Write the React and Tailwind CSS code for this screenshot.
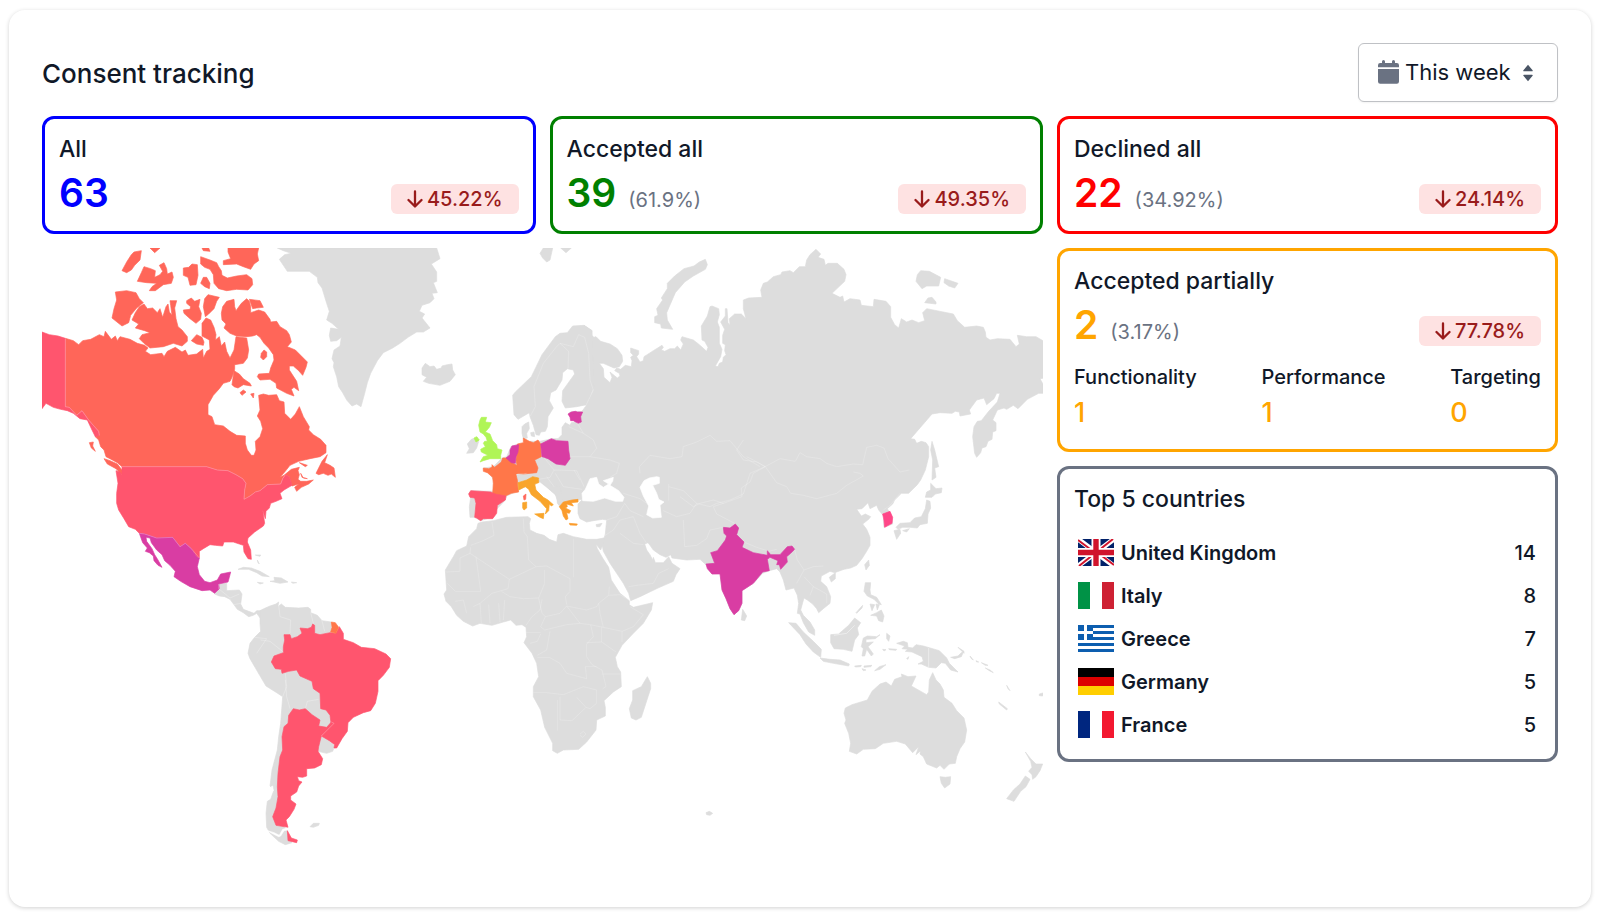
import React from "react";

/* ---------- Map data: every region is drawn in its own local frame ---------- */

const GREY = "#dddddd";
const CORAL = "#ff6659";
const ROSE = "#ff556e";
const MAGENTA = "#d93da3";
const ORANGE = "#ff7749";

// Moves a run of "x,y" points by an offset so that runs can be joined to one outline.
const shift = (dx, dy, points) =>
  points
    .trim()
    .split(/\s+/)
    .map((pair) => {
      const [x, y] = pair.split(",").map(Number);
      return `${x + dx},${y + dy}`;
    })
    .join(" ");

const EURASIA = [
  "462,256 486,272 482,284 492,292 498,290 512,304 540,312 562,326 576,346 578,364 568,380 552,384 520,370 508,370 520,386 522,412 540,428 546,412 540,396 562,414 570,408 568,400 554,392 560,384 572,388 586,376 604,380 606,362 602,352 610,346 602,338 602,324 626,332 626,342 620,350 630,366 640,362",
  shift(
    630,
    0,
    "12,350 40,332 66,316 70,322 64,330 74,334 90,326 104,326 112,318 122,330 130,312 122,300 126,290 160,300 178,314 200,334 204,322 194,304 186,300 184,258 202,228 210,200 216,198 236,206 238,224 232,246 238,262 238,310 246,328 242,350 226,378 234,380 238,370 248,366 250,352 258,344 254,332 256,314 248,310 248,286 254,268 242,246 256,228 256,206 261,206 264,248 270,254 268,236 284,222 304,222 318,236 310,206 310,180 326,174 366,172 362,150 370,130 382,126 400,110 422,104 426,96 450,92 460,98 478,80 496,80 500,60 510,44 528,28 542,42 534,52 552,58 556,76 564,70 592,70 612,88 618,104 614,124 576,160 600,172 608,168 612,186 630,176 660,180 664,196 700,200 702,178 738,184 752,200 752,232 764,254 776,264 784,236 800,246 816,240 836,248 854,242 848,218 860,206 940,222 952,242 974,262 1010,258 1030,262 1036,276 1038,292 1050,300 1072,296 1110,298 1128,320 1138,312 1132,286 1160,290 1188,290 1212,304 1212,414 1200,416 1210,434 1210,460 1196,460 1162,478 1134,506 1120,496 1100,508 1092,504 1072,510 1058,540 1068,548 1068,572 1058,576 1056,598 1044,604 1038,620 1026,624 1022,638 1010,652 1004,640 998,590 1002,560 1012,544 1024,542 1046,514 1072,486 1080,460 1070,460 1062,476 1040,494 1032,474 1010,480 988,510 992,522 960,528 958,516 946,514 936,520 900,518 876,522 812,596 824,598 830,610 844,604 858,608 866,620 866,650 856,690 842,720",
  ),
  shift(
    750,
    600,
    "712,134 686,160 664,160 644,180 638,192 622,206 628,216 636,232 638,252 612,262 610,240 616,234 606,222 596,210 590,196 570,206 564,188 546,206 530,208 544,228 556,222 572,230 566,238 548,252 560,268 570,292 570,316 560,334 546,356 530,376 512,384 492,388 464,398 450,394 424,408 422,424 440,440 452,470 450,490 430,506 416,518 410,506 398,492 382,480 372,474 368,488 362,510 370,526 390,546 404,570 404,586 386,576 370,548 360,522 352,520 356,490 352,466 342,444 318,450 310,420 300,396 290,386 268,392 248,400 220,430 186,452 186,490 176,512 162,524 150,506 138,476 126,450 120,400 96,402 78,374 60,358",
  ),
  shift(
    -30,
    690,
    "840,268 800,270 756,264 752,254 738,262 720,254 700,240 690,226 684,218 674,222 680,240 690,254 698,270 700,262 706,278 730,278 746,260 756,280 780,296 768,314 760,334 714,354 660,380 632,392 626,370 610,340 590,310 570,280 550,244 546,222 556,192 560,150 548,148 520,152 500,156 480,146 474,130 474,112",
  ),
  "444,792 458,778 444,780 420,782 400,788 388,800 378,786 376,764 350,744 330,728 322,732 300,738 280,742 264,752 230,768 226,780 200,808 190,830 152,842 134,832 120,832 118,800 122,772 116,760 124,752 190,754 190,720 180,700 160,690 160,684 190,680 216,654 230,650 244,618 262,614 282,610 300,604 330,604 366,596 384,596 396,584 396,562 406,548 420,556 424,548 440,546 416,524 420,516 456,514 466,500 490,450 470,340",
].join(" ");

const REGIONS = [
  {
    name: "north-america",
    at: "translate(-36 -24)",
    line: 0.3,
    shapes: [
      [GREY, "742,24 1220,24 1230,56 1204,72 1220,96 1220,124 1210,128 1222,158 1206,160 1212,176 1200,188 1176,196 1168,214 1184,222 1176,234 1200,264 1180,276 1160,276 1134,292 1110,310 1088,324 1060,338 1042,362 1022,400 1012,428 1004,460 993,500 980,492 966,498 950,480 938,458 926,440 920,410 910,380 912,368 906,356 912,330 930,318 934,292 920,302 902,304 898,286 902,264 926,268 906,250 890,240 898,214 890,190 876,144 864,128 862,112 838,94 772,94 748,58 764,44 784,40 760,32"],
      [CORAL, "106,295 130,302 146,314 158,302 182,298 208,284 222,290 226,274 244,298 256,288 262,302 270,290 300,298 322,310 344,316 354,324 346,334 362,344 396,340 402,350 412,334 436,322 456,336 466,330 474,346 500,342 518,328 520,354 530,334 540,328 538,300 516,288 516,250 528,234 542,240 552,262 558,284 556,300 568,290 574,318 584,306 590,334 600,354 612,330 618,290 650,294 656,330 652,354 640,370 614,374 614,388 606,412 600,424 580,430 568,446 550,466 534,494 534,524 546,530 554,554 580,558 600,574 620,586 646,588 646,610 652,630 664,646 672,646 678,630 676,604 690,590 698,566 692,544 682,528 690,510 686,466 700,462 716,466 740,464 748,482 762,486 764,520 782,538 796,522 808,500 820,530 838,560 836,570 850,584 872,598 888,616 888,638 870,650 840,656 806,664 780,676 764,696 750,712 762,706 784,688 808,682 804,692 808,704 804,718 812,724 830,724 850,720 836,732 814,742 800,754 794,742 806,732 786,738 778,710 766,704 758,716 752,732 712,734 690,752 676,756 660,768 642,780 644,750 648,730 638,716 618,704 594,692 562,690 530,680 276,680 262,668 240,656 228,650 222,630 212,620 206,600 196,590 208,586 206,574 190,556 176,540 156,512 140,526 118,502 106,500"],
      [CORAL, "256,156 290,152 318,158 328,176 340,188 320,204 302,226 296,248 276,258 246,234 252,206 260,180"],
      [CORAL, "306,240 316,218 328,200 342,192 352,206 368,204 382,218 390,206 398,232 408,200 414,192 418,216 426,226 422,196 420,182 440,182 434,204 438,236 444,260 456,270 472,290 472,304 456,318 430,310 400,320 360,324 342,310 328,296 336,284 360,278 344,272 316,264 326,252"],
      [CORAL, "276,92 290,66 304,44 312,36 334,32 330,60 314,76 304,90 290,98"],
      [CORAL, "360,24 390,24 374,38"],
      [CORAL, "322,124 334,98 342,80 362,86 376,92 374,112 390,104 398,94 388,76 402,68 410,86 412,102 426,96 430,112 424,130 400,134 376,152 358,152 366,140 380,130 350,128"],
      [CORAL, "460,84 476,82 486,72 502,74 504,106 498,134 480,136 474,112 460,106"],
      [CORAL, "516,24 536,24 540,34 520,32"],
      [CORAL, "512,50 540,60 560,68 566,80 574,92 576,106 592,114 620,108 650,104 666,116 668,134 654,150 620,148 590,152 566,146 552,130 550,104 540,88 524,82 512,72"],
      [CORAL, "594,24 686,24 682,42 686,62 672,72 662,88 640,80 620,72 580,74 580,62 602,56 594,36"],
      [CORAL, "512,130 520,112 530,112 540,130 538,146 524,140"],
      [CORAL, "470,182 484,174 494,184 510,178 506,200 514,220 512,238 498,250 480,236 462,220 460,210 480,208 482,200 470,190"],
      [CORAL, "524,176 534,164 568,172 560,184 552,206 536,222 526,230 520,200"],
      [CORAL, "484,302 500,284 516,292 522,306 520,316 500,312"],
      [CORAL, "578,200 590,184 612,178 614,200 618,212 634,190 650,176 658,184 662,200 662,218 686,210 704,216 720,238 722,246 740,244 750,260 770,272 778,284 784,306 772,320 796,330 812,346 832,366 828,382 818,406 806,392 790,378 778,378 778,390 800,424 806,452 792,442 784,448 792,468 770,460 740,444 738,430 720,418 690,420 682,410 686,402 718,400 722,384 732,360 730,344 716,324 702,310 690,292 680,284 668,288 650,290 620,288 600,280 582,264 588,252 576,240 574,220"],
      [CORAL, "658,178 690,182 700,202 680,204 668,206"],
      [CORAL, "694,340 702,330 710,336 710,350 700,360 692,352"],
      [CORAL, "612,392 628,402 640,416 660,430 664,438 640,434 624,444 612,440 606,434"],
      [CORAL, "630,458 640,450 648,456 636,466"],
      [CORAL, "662,462 672,460 670,474"],
      [CORAL, "222,656 240,662 262,672 276,690 276,704 258,686 232,672"],
      [CORAL, "178,608 190,606 188,618 196,634 184,624"],
      [CORAL, "858,700 876,664 892,644 884,668 900,676 912,684 916,712 904,702 894,706 880,700 866,704"],
      [CORAL, "808,668 832,676 826,680"],
      [CORAL, "812,700 820,714 832,716 816,712"],
      [ROSE, "36,276 58,284 84,288 106,295 106,500 118,502 140,526 156,512 176,540 190,556 206,574 208,586 196,590 186,570 172,540 150,536 130,520 112,512 92,508 70,502 48,490 36,506"],
    ],
    borders: ["M106,295V500L118,502 140,526 156,512 176,540 190,556 206,574 208,586"],
  },
  {
    name: "central-america",
    at: "translate(-36 576)",
    line: 0.3,
    shapes: [
      [ROSE, "276,80 530,80 562,90 594,92 618,104 638,116 648,130 644,150 642,178 660,168 676,156 690,152 712,134 752,132 758,116 766,104 778,110 786,136 762,150 750,160 756,176 738,184 722,190 718,204 708,214 706,236 698,210 704,250 700,258 674,276 654,294 652,306 662,330 664,358 654,356 642,336 640,316 628,312 610,306 582,306 578,318 556,316 540,314 520,326 508,334 508,354 500,350 484,326 466,310 450,320 428,292 408,296 380,294 344,282 328,280 316,268 296,260 282,236 266,210 260,190 260,160 264,130 258,92 270,96 276,104"],
      [GREY, "566,432 590,430 590,452 628,450 636,462 632,492 640,508 656,514 672,520 680,512 692,512 702,508 692,536 680,520 670,526 656,530 640,518 622,508 612,494 600,478 584,470 568,468 554,462 568,446"],
      [MAGENTA, "328,280 344,282 380,294 428,292 450,320 466,310 484,326 500,350 508,354 502,380 508,404 524,424 540,428 562,420 572,402 602,396 598,412 594,426 566,432 568,446 554,460 540,450 516,452 480,440 452,424 432,410 436,394 420,376 404,362 396,344 380,330 364,308 360,294 348,292 350,304 366,326 374,344 384,360 396,382 384,376 372,362 370,348 358,338 346,334 352,324 338,308"],
      [GREY, "624,388 640,382 664,384 690,394 718,410 696,408 680,398 656,388"],
      [GREY, "720,424 734,422 732,412 754,414 774,426 750,430 732,426"],
      [GREY, "682,427 700,429 690,432"],
      [GREY, "784,426 800,428 788,430"],
      [GREY, "676,345 692,345 690,349 682,347"],
      [GREY, "682,360 688,372 684,368"],
    ],
    borders: [
      "M276,80H530L562,90 594,92 618,104 638,116 648,130 644,150 642,178 660,168 676,156 690,152 712,134 752,132 758,116 766,104",
      "M328,280L344,282 380,294 428,292 450,320 466,310 484,326 508,354",
      "M566,432V446L600,474 628,462M612,494L632,490",
    ],
  },
  {
    name: "south-america",
    at: "translate(534 1026)",
    line: 0.3,
    shapes: [
      [GREY, "120,62 136,54 150,48 168,42 176,36 174,50 184,42 196,52 236,54 264,52 272,58 272,68 292,76 306,92 334,96 334,400 310,430 200,480 186,700 196,716 202,722 204,752 216,758 196,764 176,754 150,730 140,712 138,670 142,634 152,628 162,600 150,588 156,540 172,480 176,440 182,400 188,320 170,308 138,288 112,244 90,206 84,190 90,160 104,142 122,124 120,100"],
      [GREY, "304,438 328,452 344,468 338,484 320,490 294,484 296,460"],
      [ROSE, "192,134 210,134 214,146 232,140 246,130 240,114 262,116 274,112 278,102 284,106 284,130 300,134 330,128 348,130 358,110 370,130 370,148 400,158 424,172 464,176 498,192 512,206 508,232 490,256 474,272 474,304 466,340 452,362 430,368 400,382 384,398 382,424 366,446 350,474 342,474 344,464 328,452 304,438 334,406 330,376 318,360 302,356 300,310 280,296 276,274 240,258 230,240 206,244 186,250 184,238 166,236 154,216 162,198 190,188 190,170 194,150"],
      [ORANGE, "334,96 346,98 356,112 348,130 332,126 336,112"],
      [ROSE, "206,376 220,356 238,360 256,356 276,374 300,390 296,408 320,412 334,396 342,400 304,438 296,470 294,484 308,506 304,524 284,534 260,536 260,558 248,562 232,560 236,572 246,576 236,588 230,606 212,618 212,630 228,642 222,658 208,680 198,690 204,712 168,706 158,680 168,654 174,620 172,590 174,550 180,500 188,480 186,440 192,410 204,400"],
      [ROSE, "202,722 214,744 232,750 230,758 204,752"],
      [GREY, "270,710 280,700 298,700 296,706 280,712"],
      ["#ffffff", "142,722 162,728 178,736 188,718 202,714 202,720 192,722 182,738 176,740 160,732"],
      ["#ffffff", "154,590 158,588 160,602 152,606"],
    ],
    borders: [
      "M188,320L200,290 196,250M210,356L200,320 196,270M256,356L262,334 296,328",
      "M176,44L180,80 212,90 210,130M272,68L280,100M306,92L314,124",
      "M122,150L150,154 190,186M104,142L140,146 110,190",
      "M304,438L342,400 334,396",
    ],
  },
  {
    name: "eurasia",
    at: "translate(1164 -24)",
    line: 0.24,
    shapes: [
      [GREY, EURASIA],
      [GREY, "248,466 256,456 304,410 336,344 376,290 390,280 412,278 428,258 462,256 486,272 492,440 470,494 440,500 406,504 396,484 398,452 434,402 430,390 412,386 398,398 396,420 378,450 362,458 358,482 370,504 354,530 352,560 346,574 332,576 328,586 318,584 310,556 300,530 298,518 264,538 252,524"],
      [GREY, "276,580 276,560 284,552 296,546 298,566 290,580 292,594 280,596"],
      [GREY, "302,578 312,576 314,590 304,588"],
      [GREY, "-24,384 -14,370 0,380 12,378 20,388 34,384 36,378 52,374 66,372 68,390 76,404 60,424 30,436 -4,430 -20,424 -10,412 -24,404"],
      [GREY, "330,40 340,24 368,24 360,60 350,66 338,54"],
      [GREY, "392,24 424,24 408,38"],
      [GREY, "112,612 124,598 142,592 146,604 140,624 130,638 110,640 118,626"],
      ["#b0f557", "132,594 140,590 148,600 138,606"],
      ["#b0f557", "150,540 154,532 170,532 166,546 184,548 178,562 166,576 180,582 188,602 200,614 202,626 216,630 212,646 212,656 180,656 160,662 150,666 160,650 174,646 154,636 152,628 166,620 160,610 164,604 172,604 168,592 160,582 150,576 146,556"],
      ["#ffffff", "458,782 456,760 466,748 480,716 500,712 506,732 520,742 536,732 520,722 550,712 548,724 540,736 566,752 582,772 578,784 556,784 524,774 490,784"],
      ["#ffffff", "630,742 642,722 658,714 680,710 688,712 688,730 668,736 680,760 686,778 702,786 690,796 694,832 668,834 650,824 656,798 640,768"],
      [ORANGE, "160,684 176,686 186,682 186,674 194,682 214,666 218,654 232,654 250,670 260,676 276,680 270,690 258,704 262,720 264,744 266,756 244,760 226,768 188,762 190,730 188,712 172,698 160,694"],
      [CORAL, "280,768 288,762 287,778 282,780"],
      [ROSE, "116,762 122,752 182,756 196,762 228,768 226,780 202,796 200,820 188,836 160,836 152,842 140,834 134,832 138,790 134,774 120,772"],
      [ORANGE, "262,612 280,608 280,594 298,604 310,608 324,600 332,612 334,650 314,660 324,684 320,698 280,702 258,700 262,680 258,660 260,640"],
      [MAGENTA, "228,654 240,644 240,630 246,618 266,614 264,636 258,650 256,670 244,668"],
      [MAGENTA, "332,612 364,596 380,602 414,604 416,630 420,656 406,676 378,672 354,656 336,650"],
      [MAGENTA, "414,522 424,516 436,514 442,516 458,516 452,530 454,546 444,550 430,542 422,542 420,532"],
      ["#ffffff", "318,730 330,728 350,744 378,768 380,790 390,802 400,830 360,830 340,780"],
      [GREY, "340,730 376,764 390,802 400,788 390,740"],
      ["#f9a52b", "264,728 290,720 308,710 326,714 326,728 314,732 318,750 340,772 354,780 370,794 364,798 358,792 356,812 346,822 350,806 330,784 304,764 296,748 286,740 266,750"],
      ["#f9a52b", "278,788 290,786 290,804 282,810 278,804"],
      ["#f9a52b", "314,822 342,820 340,836 330,832"],
      ["#fb9c2c", "388,800 400,786 426,780 444,778 444,786 424,788 430,798 410,792 412,800 406,804 422,812 418,820 410,818 414,836 408,840 400,828 396,812"],
      ["#fb9c2c", "418,850 442,852 440,856 420,855"],
      [GREY, "498,854 516,850 510,860 500,860"],
    ],
    borders: [
      "M300,530L316,500 312,440 340,370 378,322 390,310 416,334 414,386",
      "M390,310L430,320 446,284 464,292 476,340 480,420 490,450 466,500",
      "M416,560L460,580 490,600 500,625 480,650 420,650M440,546L460,580M480,650L540,660 568,670 560,700 540,712",
      "M340,650L372,690 360,712 326,718M372,690L440,692 462,740M376,700L400,740 456,748M350,710L372,740",
      "M258,704L290,700M432,690L450,720",
      "M630,700L628,680 660,646 720,656 756,650 760,620 800,606 840,586 860,604 900,602 940,650 990,680",
      "M716,732V782M716,740L760,752 800,790 840,800 860,790 900,780 940,762M800,790L780,820 740,830 700,812",
      "M580,760L630,776 650,790M584,790L600,812 640,830M584,790L560,830 530,840 500,870",
      "M940,762L960,700 1005,680",
    ],
  },
  {
    name: "siberia",
    at: "translate(1794 -24)",
    line: 0.24,
    shapes: [
      [GREY, "44,230 54,226 50,206 68,180 64,174 82,146 82,130 104,108 132,86 162,78 178,66 196,58 202,74 196,88 160,108 134,126 106,158 80,218 82,240 98,268 64,264 62,252 44,248"],
      [GREY, "832,104 842,92 868,94 902,112 896,138 860,138 846,146 828,124"],
      [GREY, "914,116 954,130 944,144 926,138 912,128"],
      [GREY, "854,188 864,174 876,172 888,186 888,192"],
    ],
    borders: [
      "M375,680L420,656 466,664 480,638 500,650 540,656 560,670 590,680 640,672 668,674 680,622 710,616 732,624 744,656 780,696 808,690",
      "M375,680L340,660 320,650",
    ],
  },
  {
    name: "africa",
    at: "translate(1134 666)",
    line: 0.22,
    shapes: [
      [GREY, "174,160 186,156 220,152 260,142 324,140 332,146 328,160 330,180 350,190 372,196 388,208 410,216 414,194 430,190 460,200 500,208 530,208 552,204 550,220 542,240 528,222 532,236 548,264 566,292 574,330 600,370 628,392 628,404 640,412 698,398 694,420 670,460 640,490 606,526 586,562 592,590 602,606 604,650 580,666 552,692 556,712 556,738 530,750 528,780 500,816 476,838 430,840 412,850 398,842 398,820 374,772 362,720 340,680 340,650 356,620 350,580 336,550 312,518 320,500 318,472 306,464 288,466 272,450 250,456 216,466 180,460 158,468 130,454 110,436 94,410 78,394 72,372 80,360 76,300 100,260 110,242 140,228 146,200 170,176"],
      [GREY, "682,620 692,640 692,656 684,680 664,742 648,750 634,744 628,716 638,690 638,662 664,650"],
    ],
    borders: [
      "M152,232L150,250 120,264 120,304 78,306M150,250L268,328 264,356 216,370 180,400 160,410M168,260L182,364H106L82,340",
      "M152,226L190,212 222,196 216,156M310,146L312,186 322,200 326,270 348,290 268,328",
      "M348,290L380,288 450,326V364L436,380 440,404M460,206V322",
      "M374,300L374,340 356,384 310,386 270,380 244,364M366,388L360,420 336,440 318,466",
      "M356,384L366,430 376,440 420,430 440,408 480,460 510,464 550,472 606,484V516",
      "M440,408L500,420 530,410 536,400 566,376 568,350M566,376L600,374 630,392M536,400L540,430 550,472M606,484L640,470 670,434 630,410",
      "M376,440L362,470 374,480 440,464 480,460M318,488H362M330,520L352,514 362,492M352,562H388L420,580 440,610 500,626 496,590 530,590M390,484L380,540 352,556",
      "M512,464L520,500 500,522V560L516,584 546,600 558,650 548,656M545,472V516L500,518M545,516L588,546M545,612H600",
      "M340,668H380L430,674 490,650 530,660 530,700 510,716 498,712 470,682M412,782V690M420,680V750L456,752 498,712",
      "M106,394L130,390 140,430M180,400L184,460M206,404L210,460M236,400L240,456M254,390L250,450M480,792L490,784 498,792 488,802 480,796",
      "M550,200L580,180 600,150 640,140M600,190L640,220 670,224M626,350L650,346 700,340 716,310 746,296M640,140L660,190 680,220",
    ],
  },
  {
    name: "asia",
    at: "translate(1914 576)",
    line: 0.24,
    shapes: [
      [MAGENTA, "130,262 150,264 166,252 176,264 170,284 192,306 186,322 220,338 262,346 262,332 272,344 300,344 322,320 336,318 344,328 332,340 320,350 322,366 302,388 298,374 290,374 294,362 270,352 262,358 268,392 248,396 220,430 186,452 186,490 176,512 162,524 150,506 138,476 126,450 120,402 96,402 82,386 78,372 104,370 92,338 112,332 136,300 140,288 132,280"],
      [GREY, "188,508 200,528 194,542 184,540"],
      ["#ff4788", "608,222 630,214 638,232 636,250 614,262 612,242"],
      [GREY, "736,172 740,156 752,150 752,130 768,146 786,144 784,158 766,162 756,172"],
      [GREY, "740,180 750,184 752,204 744,222 742,250 720,254 712,264 690,262 668,262 654,268 648,262 660,250 690,248 704,234 724,230 736,206"],
      [GREY, "642,272 660,268 662,280 650,298"],
      [GREY, "668,272 688,266 680,276"],
      [GREY, "756,4 764,30 776,80 764,84 768,112 756,120 758,60 752,30"],
      [GREY, "566,360 568,376 558,390 554,374"],
      [GREY, "448,412 466,398 466,416 454,426"],
    ],
    borders: [
      "M190,0L170,30 190,60 232,66 256,80 290,128 320,140 332,160 370,166 410,176 470,160 500,136 550,108 540,100 520,96",
      "M256,80L220,100 210,126 184,144 186,170 130,190 100,200M0,170L40,200 60,190 100,180 130,190M100,200L110,222 164,250",
      "M192,306L230,322 262,332M266,334L290,328M344,328L352,360 372,390 400,380 430,378M372,390L350,430M372,410L400,440 390,466M400,440L440,462 440,490M610,210L630,196 660,160",
      "M10,240L14,320 50,316 80,296 90,270 130,262",
    ],
  },
  {
    name: "oceania",
    at: "translate(2214 996)",
    line: 0.5,
    shapes: [
      [GREY, "256,8 272,8 270,30 272,44 290,52 304,74 296,72 282,58 262,48 252,34"],
      [GREY, "270,72 284,74 276,92"],
      [GREY, "288,72 298,74 292,90"],
      [GREY, "272,106 290,98 304,90 312,108 308,126 296,122 290,108"],
      [GREY, "248,76 246,84 230,100 228,98"],
      [GREY, "26,128 48,130 70,156 100,184 124,208 122,232 100,216 78,192 60,164"],
      [GREY, "120,234 150,238 180,240 208,252 206,258 160,250 130,244"],
      [GREY, "224,258 244,256 242,260 226,261"],
      [GREY, "252,258 276,256 272,260 252,262"],
      [GREY, "246,266 258,270 250,272"],
      [GREY, "284,272 298,260 318,254 300,268"],
      [GREY, "152,164 176,162 206,136 224,114 242,128 232,144 236,164 224,180 216,214 190,208 162,206 152,188"],
      [GREY, "250,174 262,168 290,170 300,164 286,176 258,178 258,188 280,186 264,200 280,222 274,228 260,208 254,228 246,228 250,206 244,200"],
      [GREY, "320,160 330,168 326,184 320,176"],
      [GREY, "326,206 350,208 348,211 328,209"],
      [GREY, "308,208 318,209 312,213"],
      [GREY, "380,236 386,230 384,238"],
      [GREY, "350,190 370,184 382,188 384,202 398,204 408,194 430,198 478,212 500,234 508,250 534,276 512,270 496,250 484,248 468,264 446,262 424,252 414,252 430,244 426,230 396,216 376,214 384,208 366,206 374,198"],
      [GREY, "512,232 534,228 544,218 550,216 544,230 524,236"],
      [GREY, "534,202 552,214 552,220 538,206"],
      [GREY, "570,228 580,240 574,236"],
      [GREY, "588,242 596,246 590,246"],
      [GREY, "604,248 624,256 616,256"],
      [GREY, "616,264 630,270 640,278 628,272"],
      [GREY, "680,316 690,332 684,326"],
      [GREY, "656,366 682,386 680,390 658,372"],
      [GREY, "778,342 792,338 788,348 778,347"],
      [GREY, "196,384 216,374 262,360 276,334 300,312 318,306 334,318 344,298 366,290 364,282 384,290 408,288 394,318 440,344 446,336 448,300 458,278 468,300 480,312 490,330 492,352 516,370 530,392 552,414 560,450 554,486 540,506 530,530 526,550 508,552 492,568 480,556 470,564 440,552 430,530 420,522 422,512 408,524 416,500 398,518 376,492 350,484 310,490 286,506 250,508 230,522 208,514 212,490 206,460 194,430 198,420 192,400"],
      [GREY, "480,590 496,592 512,590 510,612 494,624 484,610"],
      [GREY, "736,516 752,536 768,552 788,552 780,572 768,590 758,598 756,584 746,574 756,562 752,544"],
      [GREY, "736,588 750,598 738,620 722,634 702,664 680,656 700,630 720,612"],
      [GREY, "-222,698 -212,694 -202,700 -210,706 -220,704"],
    ],
    borders: ["M446,204V262M162,166L200,160 224,136"],
  },
];

function WorldMap() {
  return (
    <svg
      viewBox="0 0 3003 1878"
      className="block h-auto w-full"
      role="img"
      aria-label="Consents by country"
    >
      {REGIONS.map((region) => (
        <g key={region.name} transform={region.at}>
          {region.shapes.map(([fill, points]) => (
            <polygon
              key={points}
              points={points}
              fill={fill}
              stroke={fill}
              strokeWidth="2"
              strokeLinejoin="round"
            />
          ))}
          {region.borders.map((d) => (
            <path key={d} d={d} fill="none" stroke="#ffffff" strokeOpacity={region.line} strokeWidth="2.5" strokeLinejoin="round" />
          ))}
        </g>
      ))}
    </svg>
  );
}

/* ---------- Flags ---------- */

const FLAG = "h-[27px] w-9 shrink-0";

function UnitedKingdomFlag() {
  return (
    <svg viewBox="0 0 36 27" className={FLAG} aria-hidden="true">
      <path fill="#012169" d="M0 0h36v27H0z" />
      <path stroke="#fff" strokeWidth="5" d="M0 0l36 27M36 0L0 27" />
      <path stroke="#d0142c" strokeWidth="2" d="M0 1l16 12M36 26L20 14M35 0L20 12M1 27l15-12" />
      <path stroke="#fff" strokeWidth="9" d="M18 0v27M0 13.5h36" />
      <path stroke="#d0142c" strokeWidth="5.4" d="M18 0v27M0 13.5h36" />
    </svg>
  );
}

function VerticalFlag({ left, right }) {
  return (
    <svg viewBox="0 0 36 27" className={FLAG} aria-hidden="true">
      <path fill="#fff" d="M0 0h36v27H0z" />
      <path fill={left} d="M0 0h12v27H0z" />
      <path fill={right} d="M24 0h12v27H24z" />
    </svg>
  );
}

function GreeceFlag() {
  return (
    <svg viewBox="0 0 36 27" className={FLAG} aria-hidden="true">
      <path fill="#fff" d="M0 0h36v27H0z" />
      <path fill="#0d5eaf" d="M0 0h36v3H0zM0 6h36v3H0zM0 12h36v3H0zM0 18h36v3H0zM0 24h36v3H0zM0 0h15v15H0z" />
      <path fill="#fff" d="M6 0h3v15H6zM0 6h15v3H0z" />
    </svg>
  );
}

function GermanyFlag() {
  return (
    <svg viewBox="0 0 36 27" className={FLAG} aria-hidden="true">
      <path fill="#000" d="M0 0h36v9H0z" />
      <path fill="#d00" d="M0 9h36v9H0z" />
      <path fill="#ffce00" d="M0 18h36v9H0z" />
    </svg>
  );
}

const COUNTRIES = [
  { name: "United Kingdom", count: 14, flag: <UnitedKingdomFlag /> },
  { name: "Italy", count: 8, flag: <VerticalFlag left="#009246" right="#ce2133" /> },
  { name: "Greece", count: 7, flag: <GreeceFlag /> },
  { name: "Germany", count: 5, flag: <GermanyFlag /> },
  { name: "France", count: 5, flag: <VerticalFlag left="#00267f" right="#f31830" /> },
];

/* ---------- Cards ---------- */

function Trend({ children }) {
  return (
    <span className="flex h-[30px] items-center gap-1 rounded-md bg-[#fee2e2] px-4 text-[20px] font-medium text-[#991b1b]">
      <svg viewBox="0 0 16 18" className="h-[18px] w-4" fill="none" stroke="currentColor" strokeWidth="2.3" strokeLinecap="round" strokeLinejoin="round" aria-hidden="true">
        <path d="M8 1.500v15M1.500 10L8 16.500l6.500-6.500" />
      </svg>
      {children}
    </span>
  );
}

function Card({ title, border, children }) {
  return (
    <section className={`rounded-xl border-3 px-3.5 pt-3.5 ${border}`}>
      <h2 className="text-[23px] leading-8 font-medium">{title}</h2>
      {children}
    </section>
  );
}

function Stat({ value, share, trend, color }) {
  return (
    <div className="flex h-12 items-start justify-between pt-2">
      <p className="flex items-baseline gap-3 leading-10">
        <span className={`text-[39px] font-semibold ${color}`}>{value}</span>
        {share && <span className="text-[20px] text-gray-500">({share})</span>}
      </p>
      <div className="pt-[11px]">
        <Trend>{trend}</Trend>
      </div>
    </div>
  );
}

function Category({ label, value }) {
  return (
    <div>
      <h3 className="text-[20px] leading-7 font-medium">{label}</h3>
      <p className="text-[27px] leading-11 font-medium text-[#ffa500]">{value}</p>
    </div>
  );
}

function PeriodSelect() {
  return (
    <div className="relative">
      <select
        aria-label="Period"
        defaultValue="This week"
        className="block h-[59px] w-[200px] appearance-none rounded-md border border-[#bfc1c5] bg-white pr-10 pl-[46px] text-[22px] shadow-xs"
      >
        <option>Today</option>
        <option>This week</option>
        <option>This month</option>
      </select>
      <svg viewBox="0 0 21 24" className="pointer-events-none absolute top-[17px] left-5 h-6 w-[21px] text-gray-500" fill="currentColor" aria-hidden="true">
        <path d="M0 9h21v12.500a2.200 2.200 0 0 1-2.200 2.200H2.200A2.200 2.200 0 0 1 0 21.500zM0 7.300V5.200A2.200 2.200 0 0 1 2.200 3H4V1.500a1 1 0 0 1 3 0V3h7V1.500a1 1 0 0 1 3 0V3h1.800A2.200 2.200 0 0 1 21 5.200v2.100z" />
      </svg>
      <svg viewBox="0 0 10 18" className="pointer-events-none absolute top-[21px] right-[25px] h-[18px] w-2.5 text-gray-600" fill="currentColor" aria-hidden="true">
        <path d="M5 .8L9.600 6.300c.4.500 0 1-.6 1H1c-.6 0-1-.5-.6-1zM5 17.200L.4 11.700c-.4-.5 0-1 .6-1h8c.6 0 1 .5.6 1z" />
      </svg>
    </div>
  );
}

export default function App() {
  return (
    <div className="min-h-screen bg-white px-[9px] pt-2.5 font-[Inter,sans-serif] text-gray-900">
      <main className="rounded-2xl bg-white p-[33px] shadow-[0_1px_4px_rgba(0,0,0,0.18)]">
        <header className="flex items-center justify-between pb-3.5">
          <h1 className="pt-0.5 text-[26px] leading-10 font-medium">Consent tracking</h1>
          <PeriodSelect />
        </header>
        <div className="grid grid-cols-[1001fr_501fr] items-start gap-3.5">
          <div className="grid grid-cols-2 gap-3.5">
            <Card title="All" border="h-[118px] border-[#0000ff]">
              <Stat value="63" trend="45.22%" color="text-[#0000ff]" />
            </Card>
            <Card title="Accepted all" border="h-[118px] border-[#008000]">
              <Stat value="39" share="61.9%" trend="49.35%" color="text-[#008000]" />
            </Card>
            <div className="col-span-2">
              <WorldMap />
            </div>
          </div>
          <div className="flex flex-col gap-3.5">
            <Card title="Declined all" border="h-[118px] border-[#ff0000]">
              <Stat value="22" share="34.92%" trend="24.14%" color="text-[#ff0000]" />
            </Card>
            <Card title="Accepted partially" border="h-[204px] border-[#ffa500]">
              <Stat value="2" share="3.17%" trend="77.78%" color="text-[#ffa500]" />
              <div className="flex justify-between pt-[18px]">
                <Category label="Functionality" value="1" />
                <Category label="Performance" value="1" />
                <Category label="Targeting" value="0" />
              </div>
            </Card>
            <Card title="Top 5 countries" border="h-[296px] border-gray-500">
              <table className="mt-4 w-full text-[20px]">
                <tbody>
                  {COUNTRIES.map(({ name, count, flag }) => (
                    <tr key={name} className="h-[43px]">
                      <th scope="row" className="pl-1 text-left font-semibold">
                        <span className="flex items-center gap-[7px]">
                          {flag}
                          {name}
                        </span>
                      </th>
                      <td className="pr-[5px] text-right font-medium">{count}</td>
                    </tr>
                  ))}
                </tbody>
              </table>
            </Card>
          </div>
        </div>
      </main>
    </div>
  );
}
